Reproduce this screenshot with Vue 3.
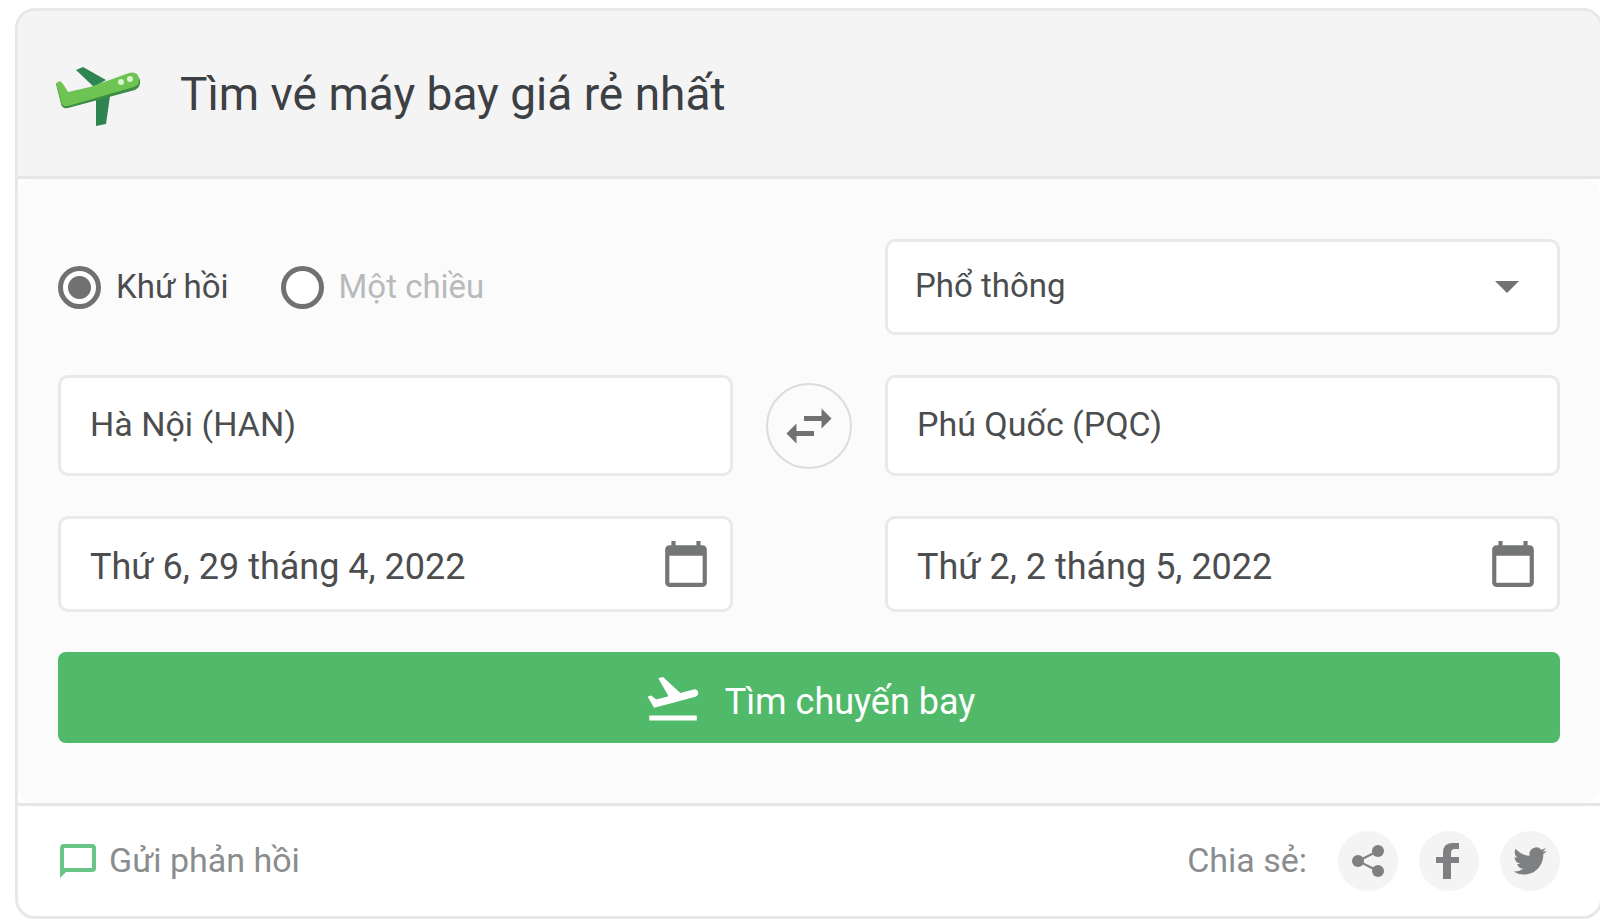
<script setup>
import { ref } from 'vue'

const trip = ref('round')
const cabin = ref('economy')
const from = ref('Hà Nội (HAN)')
const to = ref('Phú Quốc (PQC)')
const departDate = ref('Thứ 6, 29 tháng 4, 2022')
const returnDate = ref('Thứ 2, 2 tháng 5, 2022')

function swap() {
  const previous = from.value
  from.value = to.value
  to.value = previous
}
</script>

<template>
  <main class="page">
    <form class="card" @submit.prevent>
      <header class="head">
        <svg class="plane" viewBox="0 0 88 66" aria-hidden="true">
          <path d="M22 9L29 6L52 19L40 26Z" fill="#2f8551" />
          <path d="M42 34L57 28L52 63L42 65Z" fill="#2f8551" />
          <path d="M2 23L6 21L15 34L75 15Q83 12 86 19Q87 26 81 29L14 47Q8 48 7 43Z" fill="#3d8b45" />
          <path d="M2 22L6 20Q9 22 14 31L36 26L75 12Q84 10 85 18Q86 24 80 26L14 45Q8 46 7 41Z" fill="#6dc452" />
          <circle cx="67" cy="21" r="3" fill="#d8f5d0" />
          <circle cx="76" cy="18" r="3" fill="#d8f5d0" />
        </svg>
        <h1>Tìm vé máy bay giá rẻ nhất</h1>
      </header>

      <div class="body">
        <div class="trips">
          <label :class="{ off: trip !== 'round' }">
            <input v-model="trip" type="radio" name="trip" value="round" />Khứ hồi
          </label>
          <label :class="{ off: trip !== 'oneway' }">
            <input v-model="trip" type="radio" name="trip" value="oneway" />Một chiều
          </label>
        </div>
        <div class="field cabin right">
          <select v-model="cabin" aria-label="Hạng ghế">
            <option value="economy">Phổ thông</option>
            <option value="business">Thương gia</option>
          </select>
          <svg class="caret" viewBox="0 0 24 12" aria-hidden="true"><path d="M0 0H24L12 12Z" /></svg>
        </div>

        <div class="field place">
          <input v-model="from" type="text" aria-label="Điểm đi" />
        </div>
        <button class="swap" type="button" aria-label="Đổi chiều" @click="swap">
          <svg viewBox="0 0 24 24" aria-hidden="true">
            <path d="M6.99 11L3 15l3.99 4v-3H14v-2H6.99v-3zM21 9l-3.99-4v3H10v2h7.01v3L21 9z" />
          </svg>
        </button>
        <div class="field place">
          <input v-model="to" type="text" aria-label="Điểm đến" />
        </div>

        <div class="field date">
          <input v-model="departDate" type="text" aria-label="Ngày đi" />
          <svg class="calendar" viewBox="0 0 24 24" aria-hidden="true">
            <path d="M20 3h-1V1h-2v2H7V1H5v2H4c-1.1 0-2 .9-2 2v16c0 1.1.9 2 2 2h16c1.1 0 2-.9 2-2V5c0-1.1-.9-2-2-2zm0 18H4V8h16v13z" />
          </svg>
        </div>
        <div class="field date right">
          <input v-model="returnDate" type="text" aria-label="Ngày về" />
          <svg class="calendar" viewBox="0 0 24 24" aria-hidden="true">
            <path d="M20 3h-1V1h-2v2H7V1H5v2H4c-1.1 0-2 .9-2 2v16c0 1.1.9 2 2 2h16c1.1 0 2-.9 2-2V5c0-1.1-.9-2-2-2zm0 18H4V8h16v13z" />
          </svg>
        </div>

        <button class="search" type="submit">
          <svg viewBox="0 0 24 24" aria-hidden="true">
            <path d="M2.5 19h19v2h-19zm19.57-9.36c-.21-.8-1.04-1.28-1.84-1.06L14.92 10l-6.9-6.43-1.93.51 4.14 7.17-4.97 1.33-1.97-1.54-1.45.39 1.82 3.16.77 1.33 1.6-.43 5.31-1.42 4.35-1.16L21 11.49c.81-.23 1.28-1.05 1.07-1.85z" />
          </svg>
          <span>Tìm chuyến bay</span>
        </button>
      </div>

      <footer class="foot">
        <a class="feedback" href="#">
          <svg viewBox="0 0 36 34" aria-hidden="true">
            <path d="M4 0H32Q36 0 36 4V24Q36 28 32 28H6L0 34V4Q0 0 4 0ZM4 4V24H32V4Z" fill-rule="evenodd" />
          </svg>
          <span>Gửi phản hồi</span>
        </a>
        <div class="share">
          <span class="share-label">Chia sẻ:</span>
          <a href="#" aria-label="Chia sẻ liên kết">
            <svg viewBox="0 0 36 36" aria-hidden="true">
              <path d="M28 8L8 18L28 28" fill="none" stroke="#7e8082" stroke-width="2" />
              <circle cx="8" cy="18" r="6" /><circle cx="28" cy="8" r="6" /><circle cx="28" cy="28" r="6" />
            </svg>
          </a>
          <a href="#" aria-label="Facebook">
            <svg viewBox="0 0 36 36" aria-hidden="true">
              <path d="M12 36V20H5V14H12V10Q12 0 21 0H28V6H24Q20 6 20 10V14H28V20H20V36Z" />
            </svg>
          </a>
          <a href="#" aria-label="Twitter">
            <svg viewBox="-1 -1 26 26" aria-hidden="true">
              <path d="M23.953 4.57a10 10 0 01-2.825.775 4.958 4.958 0 002.163-2.723c-.951.555-2.005.959-3.127 1.184a4.92 4.92 0 00-8.384 4.482C7.69 8.095 4.067 6.13 1.64 3.162a4.822 4.822 0 00-.666 2.475c0 1.71.87 3.213 2.188 4.096a4.904 4.904 0 01-2.228-.616v.06a4.923 4.923 0 003.946 4.827 4.996 4.996 0 01-2.212.085 4.936 4.936 0 004.604 3.417 9.867 9.867 0 01-6.102 2.105c-.39 0-.779-.023-1.17-.067a13.995 13.995 0 007.557 2.209c9.053 0 13.998-7.496 13.998-13.985 0-.21 0-.42-.015-.63A9.935 9.935 0 0024 4.59z" />
            </svg>
          </a>
        </div>
      </footer>
    </form>
  </main>
</template>

<style>
body {
  margin: 0;
  background: #fff;
}
</style>

<style scoped>
.page {
  overflow: hidden;
  padding: 8px 0 3px 15px;
  font-family: Roboto, "Liberation Sans", sans-serif;
  font-size: 34px;
  line-height: 44px;
  color: #4b4d4f;
}
.page * {
  box-sizing: border-box;
}
.card {
  margin-right: -3px;
  border: 3px solid #e8e8e8;
  border-radius: 20px;
  background: #fff;
  overflow: hidden;
}
.head {
  display: flex;
  align-items: center;
  gap: 38px;
  padding: 50px 36px 49px;
  background: #f4f4f4;
  border-bottom: 3px solid #e6e6e6;
}
.plane {
  width: 88px;
  height: 66px;
}
h1 {
  margin: 0;
  font-size: 46px;
  line-height: 60px;
  font-weight: 400;
  color: #3c4043;
}
.body {
  display: grid;
  grid-template-columns: 1fr 86px 1fr;
  column-gap: 33px;
  row-gap: 40px;
  align-items: center;
  padding: 60px 40px;
  background: #fbfbfb;
  border-radius: 16px;
}
.trips {
  display: flex;
  gap: 52px;
  font-size: 33px;
}
.trips label {
  display: flex;
  align-items: center;
  gap: 15px;
}
.trips .off {
  color: #b9babb;
}
.trips input {
  appearance: none;
  width: 43px;
  height: 43px;
  margin: 0;
  border: 5px solid #6f7271;
  border-radius: 50%;
  background: #fff;
}
.trips input:checked {
  background: radial-gradient(circle, #6f7271 11px, #fff 12px);
}
.right {
  grid-column: 3;
}
.field {
  display: flex;
  align-items: center;
  height: 96px;
  padding-right: 23px;
  background: #fff;
  border: 3px solid #e9e9e9;
  border-radius: 10px;
}
.cabin {
  font-size: 33px;
}
.place {
  height: 101px;
}
.date {
  font-size: 36px;
}
.field input,
.field select {
  flex: 1;
  min-width: 0;
  height: 100%;
  padding: 0 0 0 29px;
  border: 0;
  background: none;
  font: inherit;
  color: inherit;
  appearance: none;
  outline: none;
}
.field select {
  padding: 0 0 2px 27px;
}
.place input {
  padding-bottom: 4px;
}
.date input {
  padding-top: 6px;
}
.caret {
  width: 24px;
  height: 12px;
  margin-right: 15px;
  fill: #727272;
}
.calendar {
  width: 50px;
  height: 50px;
  margin-right: -4px;
  fill: #747675;
}
.swap {
  display: grid;
  place-items: center;
  width: 86px;
  height: 86px;
  padding: 0;
  border: 2px solid #dcdcdc;
  border-radius: 50%;
  background: #fbfbfb;
}
.swap svg {
  width: 60px;
  height: 60px;
  fill: #6f7271;
}
.search {
  grid-column: 1 / -1;
  display: flex;
  align-items: center;
  justify-content: center;
  gap: 22px;
  height: 91px;
  padding: 0;
  border: 0;
  border-radius: 8px;
  background: #50b96a;
  color: #fff;
  font: inherit;
  font-size: 36px;
}
.search span {
  padding-top: 8px;
}
.search svg {
  width: 60px;
  height: 60px;
  fill: #fff;
}
.foot {
  display: flex;
  align-items: center;
  justify-content: space-between;
  padding: 25px 40px 25px 42px;
  border-top: 3px solid #e6e6e6;
  color: #8a8c8e;
}
.foot a {
  color: inherit;
  text-decoration: none;
}
.foot span {
  padding-bottom: 3px;
}
.feedback {
  display: flex;
  align-items: center;
  gap: 13px;
}
.feedback svg {
  width: 36px;
  height: 34px;
  fill: #68c585;
}
.share {
  display: flex;
  align-items: center;
  gap: 21px;
}
.share-label {
  margin-right: 10px;
}
.share a {
  display: grid;
  place-items: center;
  width: 60px;
  height: 60px;
  border-radius: 50%;
  background: #f4f4f4;
}
.share svg {
  width: 36px;
  height: 36px;
  fill: #7e8082;
}
</style>
